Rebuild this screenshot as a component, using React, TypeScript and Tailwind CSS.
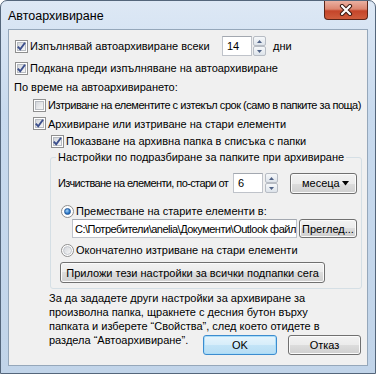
import React from "react";

const Check = ({ checked }: { checked?: boolean }) => (
  <span className="flex h-[13px] w-[13px] shrink-0 items-center justify-center border border-[#8f8f8f] bg-white">
    <span className="flex h-[9px] w-[9px] items-center justify-center border border-[#b8bcc2] bg-[linear-gradient(135deg,#d3d6db,#f7f7f7)]">
      {checked && (
        <svg width="9" height="9" viewBox="0 0 9 9" className="overflow-visible">
          <path d="M0.8 4.6 L3.2 7.2 L8 0.8" fill="none" stroke="#3c4f8d" strokeWidth="1.9" />
        </svg>
      )}
    </span>
  </span>
);

const Radio = ({ checked }: { checked?: boolean }) => (
  <span className="flex h-[13px] w-[13px] shrink-0 items-center justify-center rounded-full border border-[#8f8f8f] bg-white">
    {checked ? (
      <span className="h-[7px] w-[7px] rounded-full border border-[#245a9b] bg-[radial-gradient(circle_at_40%_35%,#a7d6fb,#2a76c6_60%,#1b4f92)]" />
    ) : (
      <span className="h-[9px] w-[9px] rounded-full border border-[#c0c4ca] bg-[linear-gradient(135deg,#d3d6db,#f7f7f7)]" />
    )}
  </span>
);

const Spin = () => (
  <span className="flex h-[20px] w-[13px] shrink-0 flex-col">
    <span className="flex flex-1 items-center justify-center rounded-[2px] border border-[#b7bcc4] bg-[linear-gradient(to_bottom,#f6f8fa,#dde3ea)]">
      <svg width="5" height="3" viewBox="0 0 5 3">
        <path d="M0 3 L2.5 0 L5 3 Z" fill="#4f6286" />
      </svg>
    </span>
    <span className="flex flex-1 items-center justify-center rounded-[2px] border border-[#b7bcc4] bg-[linear-gradient(to_bottom,#f6f8fa,#dde3ea)]">
      <svg width="5" height="3" viewBox="0 0 5 3">
        <path d="M0 0 L2.5 3 L5 0 Z" fill="#4f6286" />
      </svg>
    </span>
  </span>
);

const face =
  "flex items-center rounded-[3px] border border-[#707070] bg-[linear-gradient(to_bottom,#f2f2f2_0%,#ebebeb_50%,#dddddd_50%,#cfcfcf_100%)] shadow-[inset_0_0_0_1px_#fbfbfb]";
const btn = `${face} justify-center`;

const input = "flex items-center border border-[#bfc3ca] border-t-[#a3a8b0] bg-white";

export default function App() {
  return (
    <div className="flex h-[374px] w-[376px] flex-col whitespace-nowrap rounded-t-[7px] border border-[#54667b] bg-[linear-gradient(to_bottom,#dde8f5,#c8daee_30%,#c1d4e9)] px-[7px] pb-[7px] font-['Liberation_Sans',Arial,sans-serif] text-[11px] leading-[16px] text-black">
      <div className="flex h-[28px] items-start justify-between">
        <span className="mt-[7px] text-[12.5px]">Автоархивиране</span>
        <div className="flex h-[19px] w-[44px] items-center justify-center rounded-b-[4px] border border-t-0 border-[#5b2519] bg-[linear-gradient(to_bottom,#eab0a1_0%,#dc8670_45%,#c4452a_55%,#cf5d3d_100%)]">
          <svg width="14" height="12" viewBox="0 0 14 12">
            <path d="M3 2 L11 10 M11 2 L3 10" stroke="#3b1a12" strokeWidth="4.2" strokeLinecap="round" />
            <path d="M3 2 L11 10 M11 2 L3 10" stroke="#ffffff" strokeWidth="2.2" strokeLinecap="round" />
          </svg>
        </div>
      </div>

      <div className="flex flex-1 flex-col border border-[#95a7ba] bg-[#f0f0f0]">
        <div className="mt-[6px] flex h-[20px] items-center pl-[6px]">
          <Check checked />
          <span className="ml-[2px] w-[192px]">Изпълнявай автоархивиране всеки</span>
          <span className={`${input} h-[20px] w-[30px] pl-[4px]`}>14</span>
          <span className="ml-[1px]">
            <Spin />
          </span>
          <span className="ml-[7px]">дни</span>
        </div>

        <div className="mt-[2px] flex h-[20px] items-center pl-[6px]">
          <Check checked />
          <span className="ml-[2px]">Подкана преди изпълняване на автоархивиране</span>
        </div>

        <div className="flex h-[18px] items-center pl-[5px]">По време на автоархивирането:</div>

        <div className="flex h-[18px] items-center pl-[24px]">
          <Check />
          <span className="ml-[2px] tracking-[-0.47px]">
            Изтриване на елементите с изтекъл срок (само в папките за поща)
          </span>
        </div>

        <div className="flex h-[19px] items-center pl-[24px]">
          <Check checked />
          <span className="ml-[2px]">Архивиране или изтриване на стари елементи</span>
        </div>

        <div className="flex h-[16px] items-center pl-[42px]">
          <Check checked />
          <span className="ml-[2px]">Показване на архивна папка в списъка с папки</span>
        </div>

        <fieldset className="ml-[41px] w-[312px] rounded-[3px] border border-[#d5dfe5] pb-[5px]">
          <legend className="ml-[5px] px-[2px]">Настройки по подразбиране за папките при архивиране</legend>

          <div className="mt-[8px] flex h-[20px] items-center pl-[7px]">
            <span className="w-[175px] tracking-[-0.6px]">Изчистване на елементи, по-стари от</span>
            <span className={`${input} h-[20px] w-[30px] pl-[4px]`}>6</span>
            <span className="ml-[2px]">
              <Spin />
            </span>
            <span className={`${face} ml-[12px] h-[21px] w-[67px] pl-[11px] pr-[7px]`}>
              <span>месеца</span>
              <svg width="7" height="5" viewBox="0 0 7 5" className="ml-auto">
                <path d="M0 0 L7 0 L3.5 4.5 Z" fill="#000" />
              </svg>
            </span>
          </div>

          <div className="mt-[10px] flex h-[16px] items-center pl-[10px]">
            <Radio checked />
            <span className="ml-[2px]">Преместване на старите елементи в:</span>
          </div>

          <div className="flex h-[19px] items-center pl-[21px]">
            <span className={`${input} h-[19px] w-[225px] overflow-hidden pl-[2px] tracking-[-0.5px]`}>
              C:\Потребители\anelia\Документи\Outlook файл
            </span>
            <span className={`${btn} ml-[2px] h-[19px] w-[58px]`}>Преглед...</span>
          </div>

          <div className="mt-[4px] flex h-[16px] items-center pl-[10px]">
            <Radio />
            <span className="ml-[2px]">Окончателно изтриване на стари елементи</span>
          </div>

          <div className="mt-[4px] flex pl-[9px]">
            <span className={`${btn} h-[21px] w-[265px]`}>Приложи тези настройки за всички подпапки сега</span>
          </div>
        </fieldset>

        <div className="ml-[40px] mt-[2px] leading-[14px]">
          <div>За да зададете други настройки за архивиране за</div>
          <div>произволна папка, щракнете с десния бутон върху</div>
          <div>папката и изберете “Свойства”, след което отидете в</div>
          <div className="flex items-start">
            <span>раздела “Автоархивиране”.</span>
            <div className="ml-auto mr-[6px] mt-[2px] flex gap-[11px]">
              <span className="flex h-[20px] w-[74px] items-center justify-center rounded-[3px] border border-[#3c8ccf] bg-[linear-gradient(to_bottom,#e6f4fc_0%,#d6edfa_50%,#c3e4f7_50%,#b6ddf4_100%)] shadow-[inset_0_0_0_1px_#a9dcf8]">
                OK
              </span>
              <span className={`${btn} h-[20px] w-[73px]`}>Отказ</span>
            </div>
          </div>
        </div>
      </div>
    </div>
  );
}
